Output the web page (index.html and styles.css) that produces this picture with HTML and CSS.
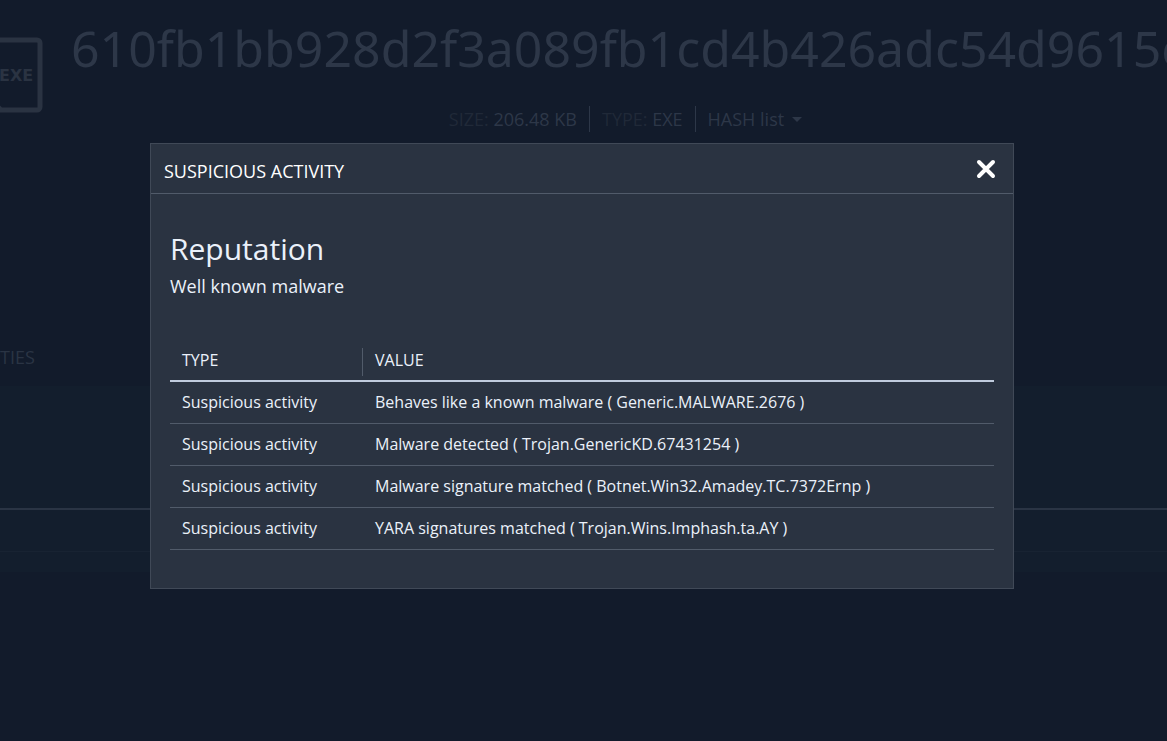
FILE: index.html
```html
<!DOCTYPE html>
<html lang="en">
<head>
  <meta charset="UTF-8">
  <title>Suspicious activity</title>
  <link rel="stylesheet" href="styles.css">
</head>
<body>

  <div class="page">
    <header class="file-header">
      <svg class="file-icon" width="68" height="76" viewBox="0 0 68 76">
        <path d="M18 3H62a3 3 0 0 1 3 3V70a3 3 0 0 1-3 3H26L2 50V6" fill="none" stroke="currentColor" stroke-width="5"/>
        <text x="24" y="44" class="file-ext">EXE</text>
      </svg>
      <h1 class="file-name">610fb1bb928d2f3a089fb1cd4b426adc54d9615e</h1>
    </header>

    <div class="file-meta">
      <span class="meta-item"><span class="meta-label">SIZE:</span> 206.48 KB</span>
      <span class="meta-item"><span class="meta-label">TYPE:</span> EXE</span>
      <button type="button" class="meta-item hash-button">HASH list
        <svg width="10" height="5" viewBox="0 0 10 5"><path d="M0 0h10L5 5z" fill="currentColor"/></svg>
      </button>
    </div>

    <nav class="tabs">
      <a href="#" class="tab">TIES</a>
    </nav>

    <section class="band">
      <div class="band-top"></div>
      <div class="band-row"></div>
      <div class="band-end"></div>
    </section>
  </div>

  <div class="overlay">
    <div class="modal" role="dialog" aria-labelledby="modalTitle">
      <div class="modal-header">
        <h2 class="modal-title" id="modalTitle">SUSPICIOUS ACTIVITY</h2>
        <button type="button" class="close-button" aria-label="Close">
          <svg width="20" height="20" viewBox="0 0 20 20"><path d="M3 3l14 14M17 3l-14 14" stroke="currentColor" stroke-width="4" stroke-linecap="round"/></svg>
        </button>
      </div>

      <div class="modal-body">
        <h3 class="reputation">Reputation</h3>
        <p class="verdict">Well known malware</p>

        <table class="activity">
          <thead>
            <tr>
              <th class="col-type"><div class="head-cell">TYPE</div></th>
              <th>VALUE</th>
            </tr>
          </thead>
          <tbody>
            <tr>
              <td>Suspicious activity</td>
              <td>Behaves like a known malware ( Generic.MALWARE.2676 )</td>
            </tr>
            <tr>
              <td>Suspicious activity</td>
              <td>Malware detected ( Trojan.GenericKD.67431254 )</td>
            </tr>
            <tr>
              <td>Suspicious activity</td>
              <td>Malware signature matched ( Botnet.Win32.Amadey.TC.7372Ernp )</td>
            </tr>
            <tr>
              <td>Suspicious activity</td>
              <td>YARA signatures matched ( Trojan.Wins.Imphash.ta.AY )</td>
            </tr>
          </tbody>
        </table>
      </div>
    </div>
  </div>

</body>
</html>
```

FILE: styles.css
```css
* {
  box-sizing: border-box;
}

body {
  margin: 0;
  background: #121b2b;
  color: #2d3748;
  font-family: "Open Sans", "Noto Sans", sans-serif;
  font-size: 18px;
  overflow: hidden;
}

h1, h2, h3, p {
  margin: 0;
  font-weight: 400;
}

button {
  padding: 0;
  border: none;
  background: none;
  color: inherit;
  font: inherit;
  cursor: pointer;
}

svg {
  display: block;
}

/* page behind the modal */
.page {
  min-height: 100vh;
}

.file-header {
  display: flex;
  align-items: flex-start;
  height: 106px;
  margin-left: -25px;
  padding-top: 14px;
}

.file-icon {
  flex: none;
  margin-top: 23px;
  color: #2a3342;
}

.file-ext {
  fill: currentColor;
  font-family: "DejaVu Sans", sans-serif;
  font-size: 16px;
  font-weight: 700;
}

.file-name {
  margin-left: 28px;
  font-family: "Noto Sans", sans-serif;
  font-size: 50px;
  line-height: 68px;
  white-space: nowrap;
}

.file-meta {
  display: flex;
  justify-content: center;
  padding-left: 84px;
  line-height: 26px;
}

.meta-item {
  padding: 0 12px;
}

.meta-item + .meta-item {
  border-left: 1px solid #2d3748;
}

.meta-label {
  color: #202938;
}

.hash-button {
  display: flex;
  align-items: center;
  gap: 8px;
}

.tabs {
  margin-top: 212px;
  line-height: 26px;
}

.tab {
  color: #2a3444;
  text-decoration: none;
}

.band {
  margin-top: 16px;
  background: #131e2d;
}

.band-top {
  height: 124px;
  border-bottom: 2px solid #2a3444;
}

.band-row {
  height: 42px;
  border-bottom: 1px solid #182332;
}

.band-end {
  height: 20px;
}

/* modal */
.overlay {
  position: fixed;
  inset: 0;
  padding: 143px 3px 0 0;
}

.modal {
  width: 90%;
  max-width: 864px;
  margin: 0 auto;
  border: 1px solid #404957;
  background: #2a3341;
  color: #ebf1fa;
}

.modal-header {
  display: flex;
  justify-content: space-between;
  align-items: center;
  height: 50px;
  padding: 4px 17px 0 13px;
  border-bottom: 1px solid #515b6a;
  color: #fff;
}

.modal-title {
  font-size: 18px;
}

.close-button {
  margin-bottom: 4px;
}

.modal-body {
  padding: 34px 19px 38px;
}

.reputation {
  font-size: 30px;
  line-height: 42px;
}

.verdict {
  line-height: 32px;
}

.activity {
  width: 100%;
  margin-top: 46px;
  border-collapse: collapse;
  font-size: 16px;
  line-height: 24px;
}

.activity th {
  padding: 0 12px 4px;
  border-bottom: 2px solid #c0cbdd;
  font-weight: 400;
  text-align: left;
  vertical-align: top;
}

.activity .col-type {
  width: 193px;
  padding-right: 0;
}

.head-cell {
  height: 28px;
  border-right: 1px solid #515b6a;
}

.activity td {
  padding: 8px 12px 9px;
  border-bottom: 1px solid #515b6a;
}
```
